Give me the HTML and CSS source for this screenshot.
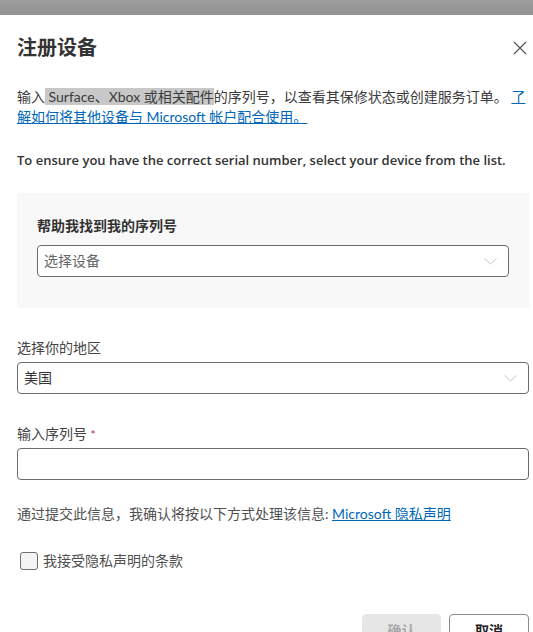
FILE: index.html
```html
<!DOCTYPE html>
<html lang="zh-CN">
<head>
    <meta charset="UTF-8">
    <meta name="viewport" content="width=device-width, initial-scale=1.0">
    <title>注册设备</title>
    <link rel="stylesheet" href="styles.css">
</head>
<body>
    <div class="backdrop"></div>

    <div class="dialog">
        <div class="dialog-header">
            <h1>注册设备</h1>
            <button class="close" aria-label="关闭">
                <svg width="14" height="14" viewBox="0 0 14 14">
                    <path d="M1 1 L13 13 M13 1 L1 13" stroke="#555" stroke-width="1.2" fill="none"/>
                </svg>
            </button>
        </div>

        <p class="intro">输入<span class="selected"> Surface、Xbox 或相关配件</span>的序列号，以查看其保修状态或创建服务订单。 <a href="#">了解如何将其他设备与 Microsoft 帐户配合使用。</a></p>

        <p class="hint">To ensure you have the correct serial number, select your device from the list.</p>

        <div class="finder">
            <div class="finder-label">帮助我找到我的序列号</div>
            <div class="select placeholder">
                <span>选择设备</span>
                <svg class="chevron" width="13" height="7" viewBox="0 0 13 7">
                    <path d="M0.5 0.5 L6.5 6 L12.5 0.5" stroke="#c4c4c4" stroke-width="1" fill="none"/>
                </svg>
            </div>
        </div>

        <div class="field">
            <label>选择你的地区</label>
            <div class="select">
                <span>美国</span>
                <svg class="chevron" width="13" height="7" viewBox="0 0 13 7">
                    <path d="M0.5 0.5 L6.5 6 L12.5 0.5" stroke="#c4c4c4" stroke-width="1" fill="none"/>
                </svg>
            </div>
        </div>

        <div class="field serial">
            <label for="serial">输入序列号 <span class="req">*</span></label>
            <input type="text" id="serial">
        </div>

        <p class="privacy">通过提交此信息，我确认将按以下方式处理该信息: <a href="#">Microsoft 隐私声明</a></p>

        <label class="check">
            <span class="box"></span>
            我接受隐私声明的条款
        </label>

        <div class="actions">
            <button class="btn btn-disabled" disabled>确认</button>
            <button class="btn btn-outline">取消</button>
        </div>
    </div>
</body>
</html>
```

FILE: styles.css
```css
* {
    margin: 0;
    padding: 0;
    box-sizing: border-box;
}

body {
    font-family: "Lato", "Noto Sans CJK SC", sans-serif;
    color: #323130;
    background: white;
    font-size: 14px;
    line-height: 20px;
    overflow: hidden;
}

.backdrop {
    height: 15px;
    background: linear-gradient(#9d9d9d, #929292);
}

.dialog {
    padding: 18px 4px 0 17px;
}

.dialog-header {
    display: flex;
    align-items: center;
    justify-content: space-between;
    height: 28px;
}

h1 {
    font-size: 20px;
    line-height: 28px;
    font-weight: 700;
    color: #333;
}

.close {
    background: none;
    border: none;
    width: 24px;
    height: 24px;
    display: flex;
    align-items: center;
    justify-content: center;
    margin-right: -3px;
    margin-top: 2px;
}

a {
    color: #0067b8;
    text-decoration: underline;
}

.intro {
    margin-top: 26px;
    color: #3b3b3b;
}

.selected {
    background: #c8c8c8;
}

.hint {
    margin-top: 23px;
    font-family: "Open Sans", "Noto Sans CJK SC", sans-serif;
    font-size: 13px;
    font-weight: 600;
    color: #333;
}

.finder {
    margin-top: 23px;
    background: #f8f8f8;
    padding: 23px 20px 31px;
}

.finder-label {
    font-weight: 700;
    color: #333;
    margin-bottom: 9px;
}

.select {
    height: 32px;
    border: 1px solid #6b6b6b;
    border-radius: 4px;
    background: white;
    display: flex;
    align-items: center;
    justify-content: space-between;
    padding: 0 11px 0 6px;
    color: #333;
}

.select.placeholder {
    color: #666;
}

.field {
    margin-top: 30px;
}

.field label {
    display: block;
    color: #444;
    margin-bottom: 4px;
}

.serial {
    margin-top: 30px;
}

.serial label {
    margin-bottom: 3px;
}

.req {
    color: #c4262e;
    font-size: 12px;
}

input {
    width: 100%;
    height: 32px;
    border: 1px solid #6b6b6b;
    border-radius: 4px;
    font-size: 14px;
    padding: 0 6px;
}

.privacy {
    margin-top: 24px;
    color: #505050;
}

.check {
    margin-top: 27px;
    display: flex;
    align-items: center;
    gap: 5px;
    padding-left: 3px;
    color: #505050;
    height: 20px;
}

.box {
    width: 18px;
    height: 18px;
    border: 1px solid #6f6f6f;
    border-radius: 3px;
    background: #f3f3f3;
}

.actions {
    margin-top: 43px;
    display: flex;
    justify-content: flex-end;
    gap: 8px;
}

.btn {
    width: 79px;
    height: 32px;
    border-radius: 4px;
    font-family: inherit;
    font-size: 14px;
    font-weight: 700;
}

.btn-disabled {
    background: #e6e6e6;
    border: 1px solid #e6e6e6;
    color: #a8a8a8;
}

.btn-outline {
    width: 80px;
    background: white;
    border: 1px solid #8a8a8a;
    color: #222;
}
```
